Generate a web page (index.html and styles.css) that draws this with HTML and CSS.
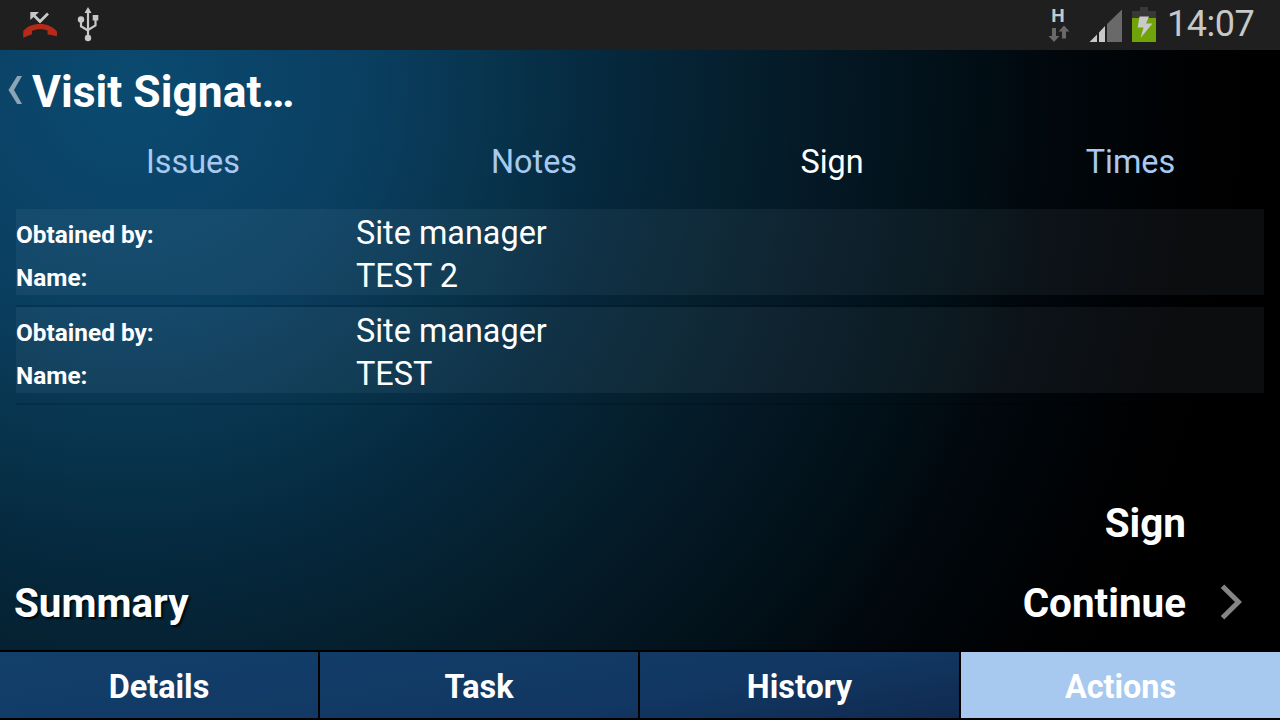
FILE: index.html
```html
<!DOCTYPE html>
<html lang="en">
<head>
<meta charset="utf-8">
<title>Visit Signature</title>
<link rel="stylesheet" href="styles.css">
</head>
<body>
<div class="screen">
  <header class="status">
    <svg class="notifications" width="110" height="50" viewBox="0 0 110 50">
      <path d="M48 13.500L40 21.500L34 15.500" fill="none" stroke="#c8c8c8" stroke-width="2.800"/>
      <path d="M30.300 12h8.700l-8.700 8z" fill="#c8c8c8"/>
      <path d="M23.200 37.800V31C27 26.500 33 24 40 24S53 26.500 57 31.500V36.300L47.500 34.300V30.500C43 28.700 36 28.700 32 31V34.300Z" fill="#b52a18"/>
      <g fill="#c8c8c8"><path d="M88 7l3.500 6h-7z"/><circle cx="81" cy="19.500" r="3.200"/><path d="M92.700 15h5.600v5.500h-5.600z"/><circle cx="88" cy="38" r="3.200"/></g>
      <path d="M88 11V38M81 20V26.300L88 30.500M95.500 19V25.500L88 30" fill="none" stroke="#c8c8c8" stroke-width="2.200"/>
    </svg>
    <div class="indicators">
      <div class="network"><span class="network-type">H</span>
        <svg width="22" height="18" viewBox="0 0 22 18"><path d="M4 3h4v8h3.500L6 17L.5 11H4zM14 13.500h4V6.500h3.500L16 .5L10.500 6.500H14z" fill="#696969"/></svg>
      </div>
      <svg class="signal" width="34" height="34" viewBox="0 0 34 34"><path d="M.5 33L8 25.500V33zM10 23.500L16 17V33h-6z" fill="#c8c8c8"/><path d="M18 15L33 .5V33H18z" fill="#696969"/></svg>
      <svg class="battery" width="24" height="35" viewBox="0 0 24 35"><path d="M8 0h8v4h8v7H0V4h8z" fill="#383838"/><path d="M0 11h24v24H0z" fill="#70a307"/><path d="M7.500 9.500H17L14 16.500H20.500L8.500 31L11.500 20.500H5.700z" fill="#cacaca"/></svg>
      <span class="clock">14:07</span>
    </div>
  </header>
  <main class="content">
    <div class="titlebar">
      <svg class="back" width="14" height="28" viewBox="0 0 14 28"><path d="M9.200 0H14L6 14L14 28H9.200L.5 14z" fill="#8ba4b6"/></svg>
      <h1 class="title">Visit Signat…</h1>
    </div>
    <nav class="tabs">
      <span class="tab">Issues</span><span class="tab">Notes</span><span class="tab tab-active">Sign</span><span class="tab">Times</span>
    </nav>
    <div class="signatures">
      <dl class="signature"><dt>Obtained by:</dt><dd>Site manager</dd><dt>Name:</dt><dd>TEST 2</dd></dl>
      <div class="divider"></div>
      <dl class="signature"><dt>Obtained by:</dt><dd>Site manager</dd><dt>Name:</dt><dd>TEST</dd></dl>
      <div class="divider"></div>
    </div>
    <div class="actions">
      <div class="action-row action-row-end"><span class="action">Sign</span></div>
      <div class="action-row"><span class="action summary">Summary</span><span class="action continue">Continue</span>
        <svg class="next" width="22" height="36" viewBox="0 0 22 36"><path d="M2.500 2.300L18.500 18L2.500 33.700" fill="none" stroke="#858585" stroke-width="5"/></svg>
      </div>
    </div>
  </main>
  <footer class="bottom">
    <div class="button">Details</div><div class="button">Task</div><div class="button button-last">History</div><div class="button button-active">Actions</div>
  </footer>
</div>
</body>
</html>
```

FILE: styles.css
```css
* { box-sizing: border-box; }
body { margin: 0; font-family: Roboto, "Liberation Sans", sans-serif; color: #fff; background: #000; }
.screen { width: 1280px; height: 720px; display: flex; flex-direction: column; overflow: hidden;
  background: radial-gradient(circle 1120px at 130px 85px, #0b4a70 0, #0a3f61 230px, #08354f 350px, #05293e 470px, #051e2c 620px, #02121b 790px, #01070c 930px, #000102 1070px, #000 1120px); }
.status { height: 50px; display: flex; justify-content: space-between; background: #1f1f1f; }
.indicators { display: flex; align-items: flex-start; color: #c8c8c8; }
.network { width: 22px; padding-top: 7px; margin-right: 19px; display: flex; flex-direction: column; align-items: center; }
.network-type { height: 18px; line-height: 18px; font-size: 19px; font-weight: 700; padding-right: 2px; }
.signal { margin: 9px 9px 0 0; }
.battery { margin-top: 7px; }
.clock { width: 124px; padding-left: 11px; font-size: 36px; line-height: 48px; font-weight: 400; letter-spacing: -0.5px; }
.content { flex: 1; display: flex; flex-direction: column; }
.titlebar { height: 78px; display: flex; padding-left: 8px; }
.back { margin: 26px 10px 0 0; }
.title { margin: 0; font-size: 44.4px; line-height: 84px; font-weight: 700; white-space: nowrap; }
.tabs { height: 81px; display: grid; grid-template-columns: 386px 296px 300px 297px; line-height: 68px; font-size: 32.4px; text-align: center; color: #a8c9f0; }
.tab-active { color: #fff; }
.signatures { padding: 0 16px; }
.signature { margin: 0; height: 86px; display: grid; grid-template-columns: 340px 1fr; grid-template-rows: 43px 43px; background: rgba(200,220,235,.058); }
.signature dt { font-size: 24.4px; font-weight: 700; line-height: 51px; }
.signature dd { margin: 0; font-size: 32.4px; line-height: 48px; }
.divider { height: 2px; margin-top: 10px; background: rgba(0,0,0,.16); }
.actions { margin-top: auto; height: 168px; }
.action-row { height: 80px; display: flex; padding: 0 38px 0 14px; }
.action-row-end { justify-content: flex-end; padding-right: 94px; }
.action { font-size: 40.4px; line-height: 84px; font-weight: 700; }
.summary { text-shadow: 2px 2px 2px rgba(0,0,0,.8); }
.continue { margin-left: auto; }
.next { margin: 22px 0 0 34px; }
.bottom { height: 70px; padding: 2px 0; display: grid; grid-template-columns: repeat(4, 1fr); grid-template-rows: 66px; background: linear-gradient(#000, #000) 0 0 / 100% 2px no-repeat, linear-gradient(#000, #000) 0 100% / 100% 2px no-repeat, linear-gradient(170deg, #12406b, #113762 55%, #102a50 80%); }
.button { border-right: 2px solid #000; text-align: center; font-size: 32.4px; line-height: 70px; font-weight: 700; }
.button-last { border-right-width: 1px; }
.button-active { border: 0; border-left: 1px solid #000; background: #a7c8ef; }
```
